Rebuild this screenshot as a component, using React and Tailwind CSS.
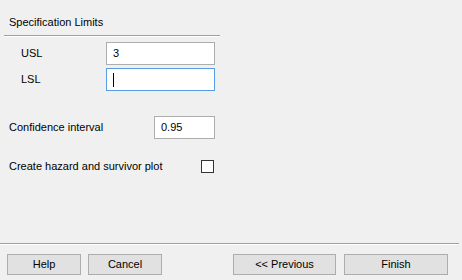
import React from "react";

const Button = ({ children, w }) => (
  <button className={`h-[21px] ${w} border border-[#adadad] bg-[#e1e1e1] text-[11px] text-black leading-none`}>
    {children}
  </button>
);

export default function App() {
  return (
    <div
      className="w-[462px] h-[280px] bg-[#f0f0f0] flex flex-col text-[11px] text-black font-['Liberation_Sans',sans-serif]"
    >
      <div className="pl-[9px] pt-[15px] h-[35px] leading-[14px]">Specification Limits</div>
      <div className="ml-[4px] w-[216px] h-[2px] border-t border-[#a0a0a0] border-b border-b-white" />

      <div className="flex flex-col gap-[3px] mt-[5px]">
        <div className="flex items-center">
          <span className="w-[106px] pl-[21px]">USL</span>
          <div className="w-[109px] h-[23px] border border-[#adadad] bg-white flex items-center pl-[6px]">3</div>
        </div>
        <div className="flex items-center">
          <span className="w-[106px] pl-[21px]">LSL</span>
          <div className="w-[109px] h-[23px] border border-[#569de5] bg-white flex items-center pl-[6px]">
            <span className="w-px h-[14px] bg-black" />
          </div>
        </div>
      </div>

      <div className="flex items-center mt-[25px]">
        <span className="w-[154px] pl-[9px]">Confidence interval</span>
        <div className="w-[61px] h-[23px] border border-[#adadad] bg-white flex items-center pl-[6px]">0.95</div>
      </div>

      <div className="flex items-center mt-[19px]">
        <span className="w-[201px] pl-[9px]">Create hazard and survivor plot</span>
        <div className="w-[13px] h-[13px] border border-[#333333] bg-white" />
      </div>

      <div className="mt-auto">
        <div className="w-[459px] h-[2px] border-t border-[#a0a0a0] border-b border-b-white" />
        <div className="flex items-center pt-[9px] pb-[5px] pl-[7px]">
          <Button w="w-[74px]">Help</Button>
          <div className="ml-[7px]">
            <Button w="w-[74px]">Cancel</Button>
          </div>
          <div className="ml-[71px]">
            <Button w="w-[103px]">&lt;&lt; Previous</Button>
          </div>
          <div className="ml-[8px]">
            <Button w="w-[104px]">Finish</Button>
          </div>
        </div>
      </div>
    </div>
  );
}
